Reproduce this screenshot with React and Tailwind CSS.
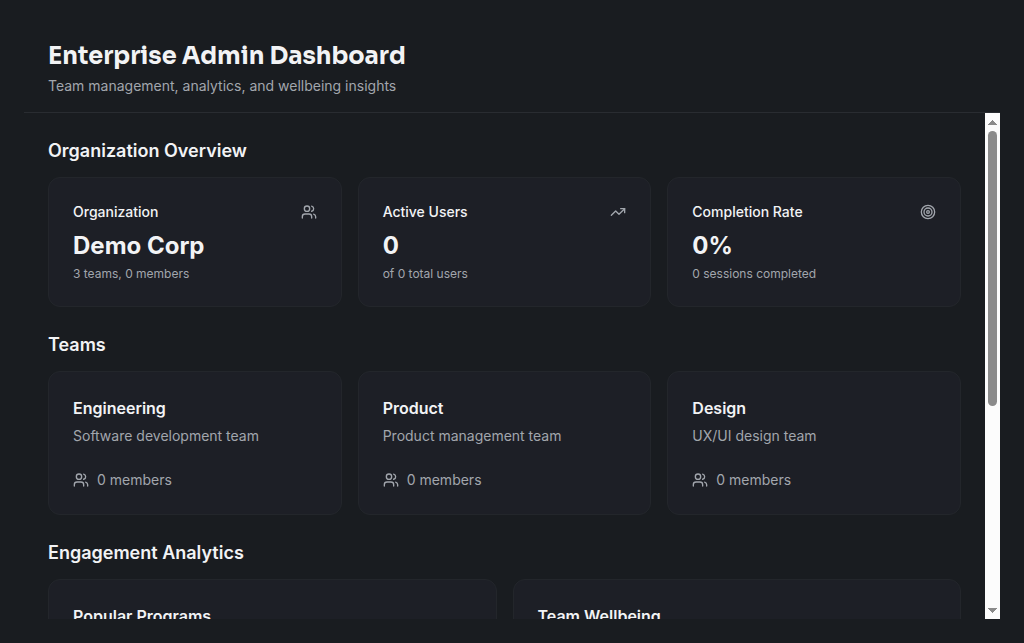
import React, { useEffect, useRef, useState } from "react";
import { Users, TrendingUp, Target } from "lucide-react";

const stats = [
  { title: "Organization", value: "Demo Corp", note: "3 teams, 0 members", Icon: Users },
  { title: "Active Users", value: "0", note: "of 0 total users", Icon: TrendingUp },
  { title: "Completion Rate", value: "0%", note: "0 sessions completed", Icon: Target },
];

const teams = [
  { name: "Engineering", description: "Software development team", members: 0 },
  { name: "Product", description: "Product management team", members: 0 },
  { name: "Design", description: "UX/UI design team", members: 0 },
];

const analytics = ["Popular Programs", "Team Wellbeing"];

function Card({ className = "", children }) {
  return (
    <article className={`rounded-xl border border-[#23262b] bg-[#1d1f26] p-6 ${className}`}>
      {children}
    </article>
  );
}

function Section({ title, children }) {
  return (
    <section className="flex flex-col gap-3">
      <h2 className="text-lg leading-7 font-semibold">{title}</h2>
      {children}
    </section>
  );
}

// Scrollable pane with an always visible vertical scroll bar.
function ScrollPane({ children }) {
  const pane = useRef(null);
  const [thumb, setThumb] = useState({ size: 58.5, before: 0 });

  const update = () => {
    const { scrollTop, scrollHeight, clientHeight } = pane.current;
    setThumb({
      size: (clientHeight / scrollHeight) * 100,
      before: (scrollTop / scrollHeight) * 100,
    });
  };

  useEffect(() => {
    update();
    window.addEventListener("resize", update);
    return () => window.removeEventListener("resize", update);
  }, []);

  const scroll = (amount) => pane.current.scrollBy({ top: amount });

  return (
    <div className="flex min-h-0 flex-1">
      <main
        ref={pane}
        onScroll={update}
        className="flex min-w-0 flex-1 flex-col gap-6 overflow-y-auto p-6 [scrollbar-width:none]"
      >
        {children}
      </main>
      <div className="flex w-[15px] shrink-0 flex-col bg-[#fcfcfc]">
        <button
          type="button"
          aria-label="Scroll up"
          onClick={() => scroll(-40)}
          className="flex h-[18px] shrink-0 items-center justify-center"
        >
          <svg viewBox="0 0 9 5" className="h-[5px] w-[9px] fill-[#8b8b8b]" shapeRendering="crispEdges">
            <path d="M4 0h1v1h1v1h1v1h1v1h1v1H0V4h1V3h1V2h1V1h1z" />
          </svg>
        </button>
        <div className="min-h-0 flex-1 px-[3px]">
          <div style={{ height: `${thumb.before}%` }} />
          <div className="rounded-full bg-[#8b8b8b]" style={{ height: `${thumb.size}%` }} />
        </div>
        <button
          type="button"
          aria-label="Scroll down"
          onClick={() => scroll(40)}
          className="flex h-[18px] shrink-0 items-center justify-center"
        >
          <svg viewBox="0 0 9 5" className="h-[5px] w-[9px] fill-[#8b8b8b]" shapeRendering="crispEdges">
            <path d="M0 0h9v1H8v1H7v1H6v1H5v1H4V4H3V3H2V2H1V1H0z" />
          </svg>
        </button>
      </div>
    </div>
  );
}

export default function App() {
  return (
    <div className="h-screen bg-[#191c20] p-6 font-['Inter',sans-serif] text-[#f2f3f5]">
      <div className="flex h-full flex-col">
        <header className="border-b border-[#292c31] px-6 py-4">
          <h1 className="font-['Sora',sans-serif] text-2xl leading-8 font-bold">
            Enterprise Admin Dashboard
          </h1>
          <p className="mt-1 text-sm leading-5 text-[#a2a6ad]">
            Team management, analytics, and wellbeing insights
          </p>
        </header>

        <ScrollPane>
          <Section title="Organization Overview">
            <div className="grid grid-cols-3 gap-4">
              {stats.map(({ title, value, note, Icon }) => (
                <Card key={title}>
                  <div className="flex items-center justify-between pb-2">
                    <h3 className="text-sm leading-5 font-medium">{title}</h3>
                    <Icon className="size-4 text-[#a2a6ad]" aria-hidden="true" />
                  </div>
                  <p className="text-2xl leading-8 font-bold">{value}</p>
                  <p className="mt-1 text-xs leading-4 text-[#a2a6ad]">{note}</p>
                </Card>
              ))}
            </div>
          </Section>

          <Section title="Teams">
            <div className="grid grid-cols-3 gap-4">
              {teams.map(({ name, description, members }) => (
                <Card key={name}>
                  <h3 className="text-base leading-6 font-semibold">{name}</h3>
                  <p className="mt-1.5 text-sm leading-5 text-[#a2a6ad]">{description}</p>
                  <div className="mt-6 flex items-center gap-2 text-sm leading-5 text-[#a2a6ad]">
                    <Users className="size-4" aria-hidden="true" />
                    <span>{members} members</span>
                  </div>
                </Card>
              ))}
            </div>
          </Section>

          <Section title="Engagement Analytics">
            <div className="grid grid-cols-2 gap-4">
              {analytics.map((title) => (
                <Card key={title} className="min-h-94">
                  <h3 className="text-base leading-6 font-semibold">{title}</h3>
                </Card>
              ))}
            </div>
          </Section>
        </ScrollPane>
      </div>
    </div>
  );
}
